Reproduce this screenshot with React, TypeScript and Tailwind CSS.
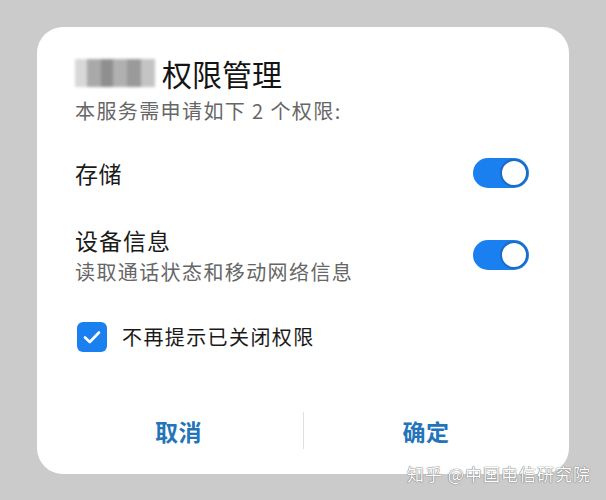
import React from "react";

function Toggle() {
  return (
    <div className="relative h-[30px] w-[56px] shrink-0 rounded-full bg-[#1a7fef]">
      <div className="absolute right-[1px] top-[1px] h-[28px] w-[28px] rounded-full border-[2px] border-[#1c6bc4] bg-white" />
    </div>
  );
}

export default function App() {
  return (
    <div
      className="relative h-[500px] w-[606px] overflow-hidden bg-[#cbcbcb] pl-[37px] pt-[27px]"
      style={{ fontFamily: '"Noto Sans CJK SC", "Noto Sans", sans-serif' }}
    >
      <div className="flex h-[447px] w-[532px] flex-col rounded-[26px] bg-white pl-[38px] pr-[40px]">
        <div className="mt-[27px] flex items-center">
          <div className="mr-[7px] flex h-[28px] w-[80px] blur-[1.5px]">
            <div className="h-full w-[12px] bg-[#d8d8d8]" />
            <div className="h-full w-[14px] bg-[#a9a9a9]" />
            <div className="h-full w-[12px] bg-[#8f8f8f]" />
            <div className="h-full w-[14px] bg-[#b0b0b0]" />
            <div className="h-full w-[14px] bg-[#9a9a9a]" />
            <div className="h-full w-[14px] bg-[#c4c4c4]" />
          </div>
          <div className="text-[30px] leading-[38px] text-[#141414]">权限管理</div>
        </div>
        <div className="mt-[6px] text-[20px] leading-[26px] tracking-[1.4px] text-[#666]">本服务需申请如下 2 个权限:</div>

        <div className="mt-[34px] flex items-center justify-between">
          <div className="text-[23px] leading-[30px] tracking-[0.5px] text-[#1a1a1a]">存储</div>
          <Toggle />
        </div>

        <div className="mt-[37px] flex items-center justify-between">
          <div>
            <div className="text-[23px] leading-[30px] tracking-[1px] text-[#1a1a1a]">设备信息</div>
            <div className="mt-[4px] text-[20px] leading-[26px] tracking-[1.4px] text-[#666]">读取通话状态和移动网络信息</div>
          </div>
          <Toggle />
        </div>

        <div className="mt-[37px] flex items-center">
          <div className="ml-[2px] flex h-[30px] w-[30px] items-center justify-center rounded-[6px] bg-[#1a7fef]">
            <svg width="18" height="14" viewBox="0 0 18 14" fill="none">
              <path d="M2 7.5 L6.8 12 L16 2.5" stroke="white" strokeWidth="2.6" strokeLinecap="round" strokeLinejoin="round" />
            </svg>
          </div>
          <div className="ml-[15px] text-[20px] leading-[30px] tracking-[1.4px] text-[#1a1a1a]">不再提示已关闭权限</div>
        </div>

        <div className="mt-[60px] flex items-center">
          <div className="flex w-[228px] justify-center pr-[21px] text-[23px] font-bold leading-[32px] tracking-[0.5px] text-[#2374b8]">取消</div>
          <div className="h-[37px] w-[1px] bg-[#e0e0e0]" />
          <div className="flex flex-1 justify-center pl-[19px] text-[23px] font-bold leading-[32px] tracking-[0.5px] text-[#2374b8]">确定</div>
        </div>
      </div>
      <div
        className="absolute left-[407px] top-[462px] text-[17px] leading-[24px] tracking-[1px] text-white"
        style={{ textShadow: "0 0 1px #666, 0 0 1px #666" }}
      >
        知乎 @中国电信研究院
      </div>
    </div>
  );
}
